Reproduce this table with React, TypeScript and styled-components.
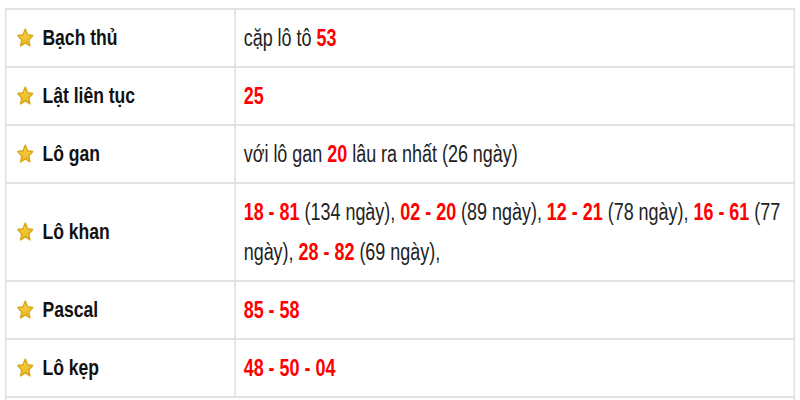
import React from 'react'
import styled, {createGlobalStyle} from 'styled-components'

// the reference capture is squeezed horizontally, so the table is laid out
// wider and then narrowed with scaleX
const SQUEEZE = 0.78

const GlobalStyle = createGlobalStyle`
  html, body {
    margin: 0;
    padding: 0;
    background: #ffffff;
  }
  body {
    font-family: "Liberation Sans", Arial, sans-serif;
    overflow: hidden;
  }
`

type Part = {text: string; hot?: boolean}

interface Row {
  label: string
  value: Part[]
}

const ROWS: Row[] = [
  {label: 'Bạch thủ', value: [{text: 'cặp lô tô '}, {text: '53', hot: true}]},
  {label: 'Lật liên tục', value: [{text: '25', hot: true}]},
  {
    label: 'Lô gan',
    value: [
      {text: 'với lô gan '},
      {text: '20', hot: true},
      {text: ' lâu ra nhất (26 ngày)'},
    ],
  },
  {
    label: 'Lô khan',
    value: [
      {text: '18 - 81', hot: true},
      {text: ' (134 ngày), '},
      {text: '02 - 20', hot: true},
      {text: ' (89 ngày), '},
      {text: '12 - 21', hot: true},
      {text: ' (78 ngày), '},
      {text: '16 - 61', hot: true},
      {text: ' (77 ngày), '},
      {text: '28 - 82', hot: true},
      {text: ' (69 ngày),'},
    ],
  },
  {label: 'Pascal', value: [{text: '85 - 58', hot: true}]},
  {label: 'Lô kẹp', value: [{text: '48 - 50 - 04', hot: true}]},
]

const Star = () => (
  <StarIcon viewBox="0 0 24 24" preserveAspectRatio="none" aria-hidden>
    <defs>
      <linearGradient id="starFill" x1="0" y1="0" x2="0" y2="1">
        <stop offset="0" stopColor="#f8d64a" />
        <stop offset="1" stopColor="#e8b41e" />
      </linearGradient>
    </defs>
    <path
      d="M12 2.4l2.9 6.1 6.6.8-4.9 4.6 1.3 6.6L12 17.2l-5.9 3.3 1.3-6.6-4.9-4.6 6.6-.8z"
      fill="url(#starFill)"
      stroke="#dca716"
      strokeWidth="1.8"
      strokeLinejoin="round"
    />
  </StarIcon>
)

export default function App() {
  return (
    <>
      <GlobalStyle />
      <Page>
        <Squeezed $scale={SQUEEZE}>
          <Table>
            <tbody>
              {ROWS.map(row => (
                <tr key={row.label}>
                  <LabelCell>
                    <Label>
                      <Star />
                      {row.label}
                    </Label>
                  </LabelCell>
                  <ValueCell>
                    {row.value.map((part, i) =>
                      part.hot ? (
                        <Hot key={i}>{part.text}</Hot>
                      ) : (
                        <span key={i}>{part.text}</span>
                      )
                    )}
                  </ValueCell>
                </tr>
              ))}
              <tr>
                <ValueCell colSpan={2}>&nbsp;</ValueCell>
              </tr>
            </tbody>
          </Table>
        </Squeezed>
      </Page>
    </>
  )
}

const Page = styled.div`
  padding: 8px 0 0 5px;
  height: 392px;
  overflow: hidden;
`

const Squeezed = styled.div<{$scale: number}>`
  width: ${p => 790 / p.$scale}px;
  transform: scaleX(${p => p.$scale});
  transform-origin: 0 0;
`

const Table = styled.table`
  width: 100%;
  border-collapse: collapse;
  table-layout: fixed;

  td {
    border: 2px solid #e1e1e1;
    line-height: 40px;
    vertical-align: middle;
  }
`

const LabelCell = styled.td`
  width: 268px;
  padding: 8px 12px;
`

const Label = styled.div`
  display: flex;
  align-items: center;
  gap: 10px;
  font-size: 22.5px;
  font-weight: bold;
  color: #111111;
`

const StarIcon = styled.svg`
  width: 24px;
  height: 22px;
  flex: none;
`

const ValueCell = styled.td`
  padding: 8px 6px 8px 10px;
  font-size: 23px;
  color: #222222;
`

const Hot = styled.strong`
  color: #ff0000;
  font-weight: bold;
`
